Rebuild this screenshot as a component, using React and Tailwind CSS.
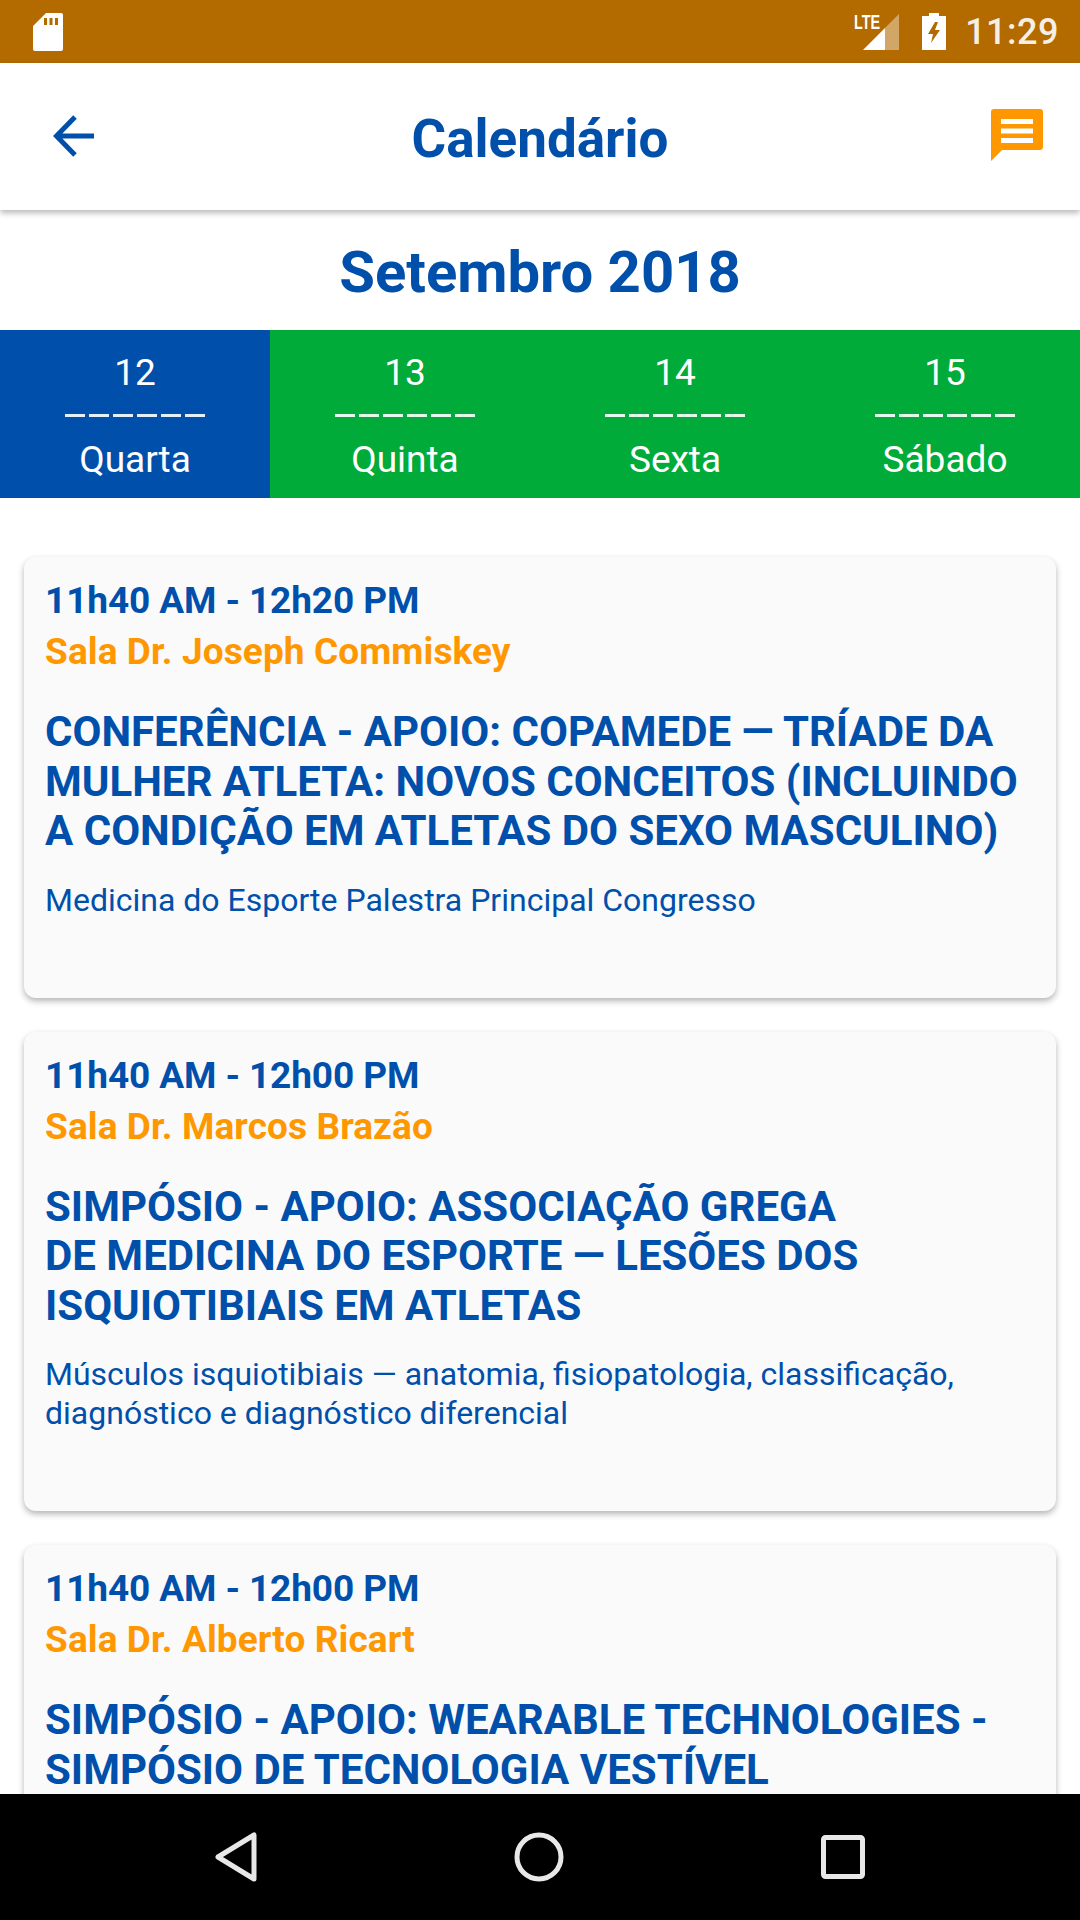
import React from 'react';

const days = [
    { num: '12', name: 'Quarta', active: true },
    { num: '13', name: 'Quinta' },
    { num: '14', name: 'Sexta' },
    { num: '15', name: 'Sábado' },
];

const events = [
    {
        time: '11h40 AM - 12h20 PM',
        room: 'Sala Dr. Joseph Commiskey',
        title: ['CONFERÊNCIA - APOIO: COPAMEDE — TRÍADE DA', 'MULHER ATLETA: NOVOS CONCEITOS (INCLUINDO', 'A CONDIÇÃO EM ATLETAS DO SEXO MASCULINO)'],
        desc: ['Medicina do Esporte Palestra Principal Congresso'],
    },
    {
        time: '11h40 AM - 12h00 PM',
        room: 'Sala Dr. Marcos Brazão',
        title: ['SIMPÓSIO - APOIO: ASSOCIAÇÃO GREGA', 'DE MEDICINA DO ESPORTE — LESÕES DOS', 'ISQUIOTIBIAIS EM ATLETAS'],
        desc: ['Músculos isquiotibiais — anatomia, fisiopatologia, classificação,', 'diagnóstico e diagnóstico diferencial'],
    },
    {
        time: '11h40 AM - 12h00 PM',
        room: 'Sala Dr. Alberto Ricart',
        title: ['SIMPÓSIO - APOIO: WEARABLE TECHNOLOGIES -', 'SIMPÓSIO DE TECNOLOGIA VESTÍVEL'],
        desc: [],
    },
];

const StatusBar = () => (
    <div className="h-[63px] shrink-0 bg-[#b36b00] flex items-center justify-between pl-[32px] pr-[21px]">
        <svg width="32" height="39" viewBox="0 0 32 39">
            <path fill="#fff" fillRule="evenodd" d="M14 1h15a2 2 0 0 1 2 2v34a2 2 0 0 1-2 2H3a2 2 0 0 1-2-2V14zM12 6v7h3V6zm5.500 0v7h3V6zm5.500 0v7h3V6z" />
        </svg>
        <div className="flex items-center">
            <div className="relative w-[36px] h-[36px] mt-[1px]">
                <span className="absolute left-[-9px] top-[-1px] text-[20px] leading-[18px] font-bold text-white [font-family:'Liberation_Sans',sans-serif] scale-x-[0.72] origin-left">LTE</span>
                <svg className="absolute left-0 top-0" width="36" height="36" viewBox="0 0 36 36">
                    <path fill="#fff" fillOpacity="0.4" d="M36 0v36H22V14z" />
                    <path fill="#fff" d="M22 14v22H0z" />
                </svg>
            </div>
            <svg className="ml-[23px]" width="24" height="37" viewBox="0 0 24 37">
                <path fill="#fff" fillRule="evenodd" d="M7 0h10v3h7v34H0V3h7zM13 9 6 21h5l-2 9 9-13h-5l3-8z" />
            </svg>
            <span className="ml-[19px] text-[36px] leading-none font-medium text-[#f5efe6] tracking-[0.5px]">11:29</span>
        </div>
    </div>
);

const Toolbar = () => (
    <header className="relative z-10 h-[147px] shrink-0 bg-white shadow-[0_3px_6px_rgba(0,0,0,0.28)] flex items-center justify-between pl-[53px] pr-[36px]">
        <svg className="mt-[-2px]" width="41" height="42" viewBox="0 0 41 42">
            <path fill="none" stroke="#0050ab" strokeWidth="5" d="M41 21H5M22 2 3.500 21 22 40" />
        </svg>
        <h1 className="absolute inset-x-0 text-center text-[53px] leading-none font-bold text-[#0050ab] mt-[5px]">Calendário</h1>
        <svg className="mt-[-3px]" width="54" height="54" viewBox="0 0 54 54">
            <path fill="#ff9800" d="M4 1h46a3 3 0 0 1 3 3v35a3 3 0 0 1-3 3H12L1 53V4a3 3 0 0 1 3-3z" />
            <path fill="#fff" d="M11 11h32v5H11zm0 9.500h32v5H11zM11 30h32v5H11z" />
        </svg>
    </header>
);

const DayTabs = () => (
    <div className="grid grid-cols-4 h-[168px] shrink-0">
        {days.map(d => (
            <div key={d.num} className={`flex flex-col items-center text-white ${d.active ? 'bg-[#0050ab]' : 'bg-[#00ab39]'}`}>
                <span className="text-[37px] leading-[42px] mt-[22px]">{d.num}</span>
                <div className="flex gap-[4px] mt-[20px]">
                    {[0, 1, 2, 3, 4, 5].map(i => (
                        <span key={i} className="w-[20px] h-[3px] bg-white/90" />
                    ))}
                </div>
                <span className="text-[37px] leading-[42px] mt-[22px]">{d.name}</span>
            </div>
        ))}
    </div>
);

const EventCard = ({ event }) => (
    <div className="bg-[#fafafa] rounded-[12px] shadow-[0_3px_6px_rgba(0,0,0,0.3)] px-[21px] pt-[18px] pb-[78px] shrink-0">
        <div className="text-[37px] leading-[51px] font-bold tracking-[-0.1px] text-[#0050ab]">{event.time}</div>
        <div className="text-[37px] leading-[51px] font-bold tracking-[0.1px] text-[#ff9800]">{event.room}</div>
        <div className="mt-[30px] text-[42px] leading-[49.500px] font-bold text-[#0050ab] whitespace-nowrap">
            {event.title.map(line => <div key={line}>{line}</div>)}
        </div>
        <div className="mt-[25px] text-[32px] leading-[39px] text-[#0050ab] whitespace-nowrap">
            {event.desc.map(line => <div key={line}>{line}</div>)}
        </div>
    </div>
);

const App = () => (
    <div className="w-[1080px] h-[1920px] flex flex-col overflow-hidden bg-white font-['Roboto',sans-serif]">
        <StatusBar />
        <Toolbar />
        <div className="flex-1 min-h-0 flex flex-col overflow-hidden">
            <h2 className="h-[120px] shrink-0 flex items-center justify-center pt-[4px] text-[58px] font-bold text-[#0050ab]">Setembro 2018</h2>
            <DayTabs />
            <div className="flex flex-col gap-[34px] px-[24px] pt-[59px]">
                {events.map(e => <EventCard key={e.room} event={e} />)}
            </div>
        </div>
        <nav className="h-[126px] shrink-0 bg-black flex items-center justify-center">
            <div className="w-[650px] flex items-center justify-between">
                <svg width="42" height="50" viewBox="0 0 42 50">
                    <path fill="none" stroke="#e8e8e8" strokeWidth="5" strokeLinejoin="round" d="M39 3v44L3 25z" />
                </svg>
                <svg width="50" height="50" viewBox="0 0 50 50">
                    <circle cx="25" cy="25" r="22" fill="none" stroke="#e8e8e8" strokeWidth="5" />
                </svg>
                <svg width="44" height="44" viewBox="0 0 44 44">
                    <rect x="2.500" y="2.500" width="39" height="39" rx="2" fill="none" stroke="#e8e8e8" strokeWidth="5" />
                </svg>
            </div>
        </nav>
    </div>
);

export default App;
